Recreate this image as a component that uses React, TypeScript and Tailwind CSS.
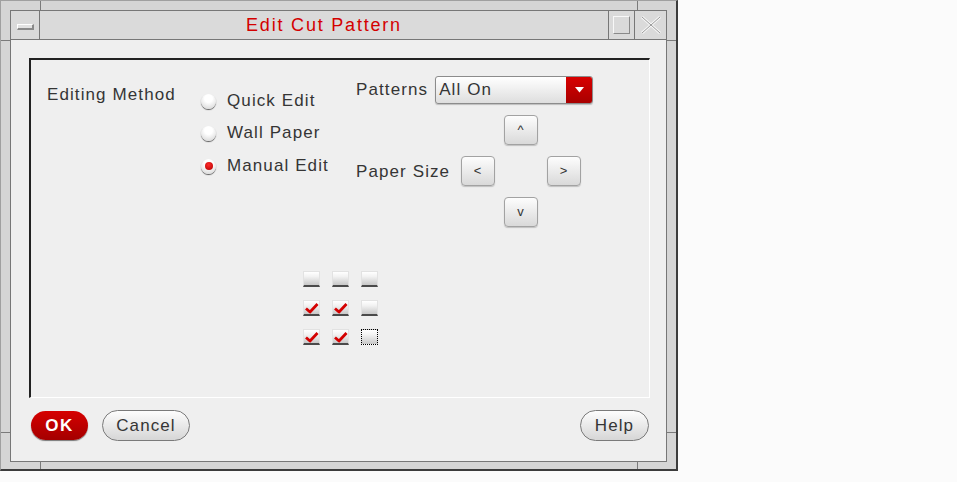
const font = "font-['Liberation_Sans',Arial,sans-serif]"

const Radio = ({ label, on }: { label: string; on?: boolean }) => (
  <div className="flex h-[32.5px] items-center gap-[11px]">
    <div className="mt-[2px] flex h-[15px] w-[15px] items-center justify-center rounded-full bg-[radial-gradient(circle_at_50%_30%,#ffffff_30%,#cfcfcf)] shadow-[0_1px_1px_#5a5a5a]">
      {on && <div className="h-[8px] w-[8px] rounded-full bg-[radial-gradient(circle_at_45%_35%,#ff2a2a,#b00000)]" />}
    </div>
    <span>{label}</span>
  </div>
)

const ArrowBtn = ({ t }: { t: string }) => (
  <button className="flex h-[30px] w-[34px] items-center justify-center rounded-[4px] border border-[#a2a2a2] bg-[linear-gradient(#fdfdfd,#d9d9d9)] text-[13px] text-[#333] shadow-[0_1px_1px_#c0c0c0]">
    {t}
  </button>
)

const Box = ({ checked, focus }: { checked?: boolean; focus?: boolean }) => (
  <div
    className={
      "flex h-[16px] w-[17px] items-center justify-center bg-[linear-gradient(#ffffff,#f2f2f2_35%,#c8c8c8)] " +
      (focus
        ? "border border-dotted border-black"
        : "border-x border-t border-[#e2e2e2] border-b-2 border-b-[#4a4a4a]")
    }
  >
    {checked && (
      <svg width="15" height="12" viewBox="0 0 15 12">
        <path d="M2 6.5 L6 10 L13.5 2" fill="none" stroke="#d40000" strokeWidth="2.8" strokeLinejoin="round" />
      </svg>
    )}
  </div>
)

export default function App() {
  return (
    <div className={`h-[482px] w-[957px] bg-[#fbfbfb] ${font}`}>
      <div className="relative h-[471px] w-[678px] border-t border-l border-[#a0a0a0] border-r-2 border-b-2 border-r-[#3c3c3c] border-b-[#3c3c3c] bg-[#d5d5d5] pt-[9px] pr-[9px] pb-[7px] pl-[9px]">
        {/* resize ticks */}
        <div className="absolute top-0 left-[39px] h-[9px] w-px bg-[#7a7a7a]" />
        <div className="absolute top-0 left-[636px] h-[9px] w-px bg-[#7a7a7a]" />
        <div className="absolute bottom-0 left-[39px] h-[8px] w-px bg-[#7a7a7a]" />
        <div className="absolute bottom-0 left-[636px] h-[8px] w-px bg-[#7a7a7a]" />
        <div className="absolute top-[39px] left-0 h-px w-[9px] bg-[#7a7a7a]" />
        <div className="absolute top-[431px] left-0 h-px w-[9px] bg-[#7a7a7a]" />
        <div className="absolute top-[39px] right-0 h-px w-[9px] bg-[#7a7a7a]" />
        <div className="absolute top-[431px] right-0 h-px w-[9px] bg-[#7a7a7a]" />

        <div className="flex h-full flex-col border border-[#777]">
          {/* title bar */}
          <div className="flex h-[29px] shrink-0 border-b border-[#777] bg-[#dadada]">
            <div className="flex w-[29px] items-center justify-center border-r border-[#777]">
              <div className="mt-[3px] h-[6px] w-[17px] border-t border-l border-white border-r-2 border-b-2 border-r-[#8a8a8a] border-b-[#8a8a8a] bg-[#e2e2e2]" />
            </div>
            <div className="flex flex-1 items-center justify-center text-[18px] tracking-[1.8px] text-[#d40000]">
              Edit Cut Pattern
            </div>
            <div className="flex w-[26px] items-center justify-center border-l border-[#777]">
              <div className="h-[18px] w-[17px] border border-t-[#f8f8f8] border-l-[#f8f8f8] border-r-[#8a8a8a] border-b-[#8a8a8a] bg-[#dadada]" />
            </div>
            <div className="flex w-[32px] items-center justify-center border-l border-[#777]">
              <svg width="22" height="20" viewBox="0 0 22 20">
                <path d="M2 2 L20 18 M20 2 L2 18" stroke="#f6f6f6" strokeWidth="3" />
                <path d="M2 2 L20 18 M20 2 L2 18" stroke="#9a9a9a" strokeWidth="1" />
              </svg>
            </div>
          </div>

          {/* body */}
          <div className="flex flex-1 flex-col bg-[#efefef] text-[17px] tracking-[1.1px] text-[#353535]">
            <div className="mt-[18px] ml-[18px] h-[340px] w-[621px] border-t-2 border-l-2 border-[#222] border-r border-b border-r-white border-b-white">
              <div className="flex">
                <div className="mt-[25px] ml-[16px] w-[154px] leading-[20px]">Editing Method</div>
                <div className="mt-[24px] flex w-[155px] flex-col">
                  <Radio label="Quick Edit" />
                  <Radio label="Wall Paper" />
                  <Radio label="Manual Edit" on />
                </div>
                <div className="mt-[16px] flex flex-col">
                  <div className="flex h-[28px] items-center gap-[7px]">
                    <span>Patterns</span>
                    <div className="flex h-[28px] w-[158px] overflow-hidden rounded-[3px] border border-[#8c8c8c] bg-[linear-gradient(#ffffff,#dedede)] shadow-[0_1px_1px_#bdbdbd]">
                      <span className="flex-1 pl-[3px] leading-[26px]">All On</span>
                      <div className="flex w-[26px] items-center justify-center bg-[linear-gradient(#d80000,#a80000)]">
                        <svg width="9" height="6" viewBox="0 0 9 6">
                          <path d="M0 0 L9 0 L4.5 5.5 Z" fill="#fff" />
                        </svg>
                      </div>
                    </div>
                  </div>
                  <div className="mt-[11px] grid grid-cols-[96px_34px_34px_34px] grid-rows-[30px_30px_30px] gap-x-[9px] gap-y-[11px]">
                    <div />
                    <div />
                    <ArrowBtn t="^" />
                    <div />
                    <div className="flex items-center pt-[1px]">Paper Size</div>
                    <ArrowBtn t="<" />
                    <div />
                    <ArrowBtn t=">" />
                    <div />
                    <div />
                    <ArrowBtn t="v" />
                    <div />
                  </div>
                </div>
              </div>

              <div className="mt-[44px] flex justify-center">
                <div className="grid grid-cols-[17px_17px_17px] gap-x-[12px] gap-y-[13px]">
                  <Box />
                  <Box />
                  <Box />
                  <Box checked />
                  <Box checked />
                  <Box />
                  <Box checked />
                  <Box checked />
                  <Box focus />
                </div>
              </div>
            </div>

            <div className="mt-[12px] flex items-center pr-[17px] pl-[20px]">
              <button className="h-[29px] w-[57px] rounded-full bg-[linear-gradient(#d60000,#a40000)] text-[17px] font-bold tracking-[1.5px] text-white shadow-[0_1px_1px_#777]">
                OK
              </button>
              <button className="ml-[14px] h-[31px] w-[88px] rounded-full border border-[#7a7a7a] bg-[linear-gradient(#fdfdfd,#d6d6d6)] tracking-[1.1px] text-[#353535]">
                Cancel
              </button>
              <div className="flex-1" />
              <button className="h-[31px] w-[69px] rounded-full border border-[#7a7a7a] bg-[linear-gradient(#fdfdfd,#d6d6d6)] tracking-[1.1px] text-[#353535]">
                Help
              </button>
            </div>
          </div>
        </div>
      </div>
    </div>
  )
}
